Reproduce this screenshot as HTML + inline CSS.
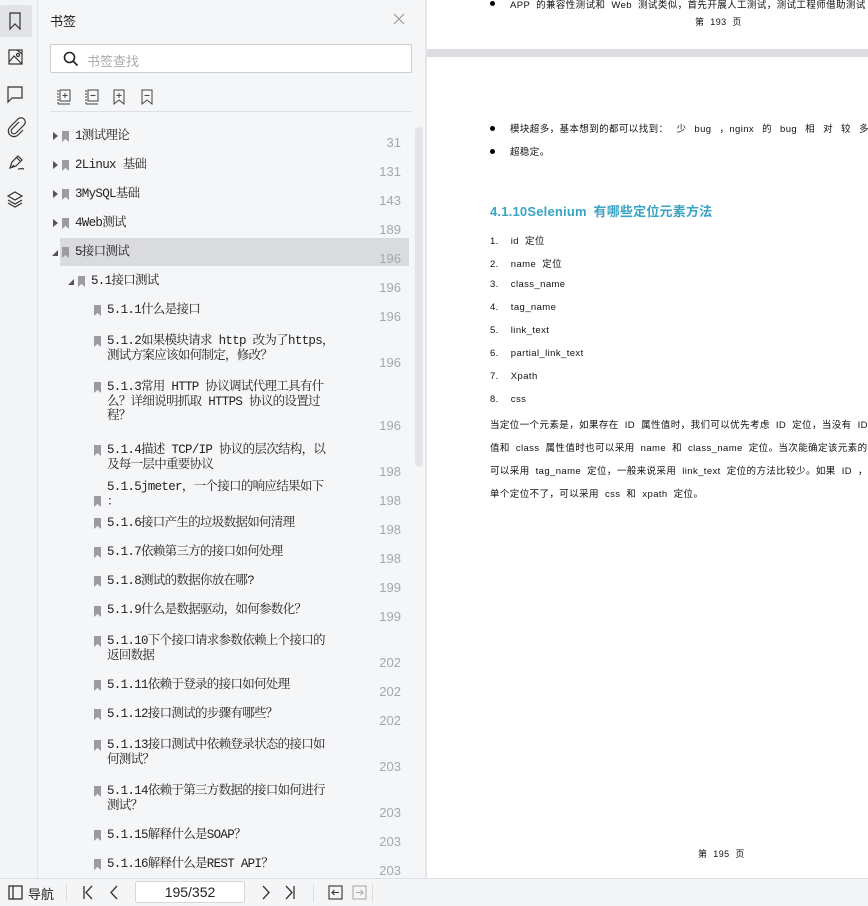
<!DOCTYPE html>
<html><head><meta charset="utf-8"><style>
*{margin:0;padding:0;box-sizing:border-box}
body{width:868px;height:906px;overflow:hidden;background:#fff;font-family:"Liberation Sans","Noto Sans CJK SC",sans-serif;position:relative}
.abs{position:absolute}
#rail{left:0;top:0;width:38px;height:878px;background:#f3f4f6;border-right:1px solid #e3e4e7}
#panel{left:38px;top:0;width:387px;height:878px;background:#f5f6f8;overflow:hidden}
#sep{left:425px;top:0;width:2px;height:878px;background:#e4e5e8}
.t{position:absolute;font-family:"Liberation Mono","Noto Serif CJK SC",monospace;font-size:12.5px;color:#222;line-height:14.5px;white-space:nowrap;letter-spacing:-0.7px}
.n{position:absolute;right:24px;font-size:13px;color:#a3a8b0;line-height:14px}
.bm{position:absolute;width:7px;height:11px;background:#9a9ca0;clip-path:polygon(0 0,100% 0,100% 100%,50% 72%,0 100%)}
.ar{position:absolute;width:0;height:0;border-left:5px solid #555;border-top:4px solid transparent;border-bottom:4px solid transparent}
.ad{position:absolute;width:0;height:0;border-right:6px solid #555;border-top:6px solid transparent}
.d{position:absolute;font-family:"Liberation Sans","Noto Sans CJK SC",sans-serif;font-size:9.5px;color:#111;white-space:nowrap;letter-spacing:0.4px;word-spacing:3px}
#bar{left:0;top:878px;width:868px;height:28px;background:#f4f5f7;border-top:1px solid #dfe0e3}
</style></head><body>
<div id="rail" class="abs">
 <div class="abs" style="left:0;top:5px;width:32px;height:32px;background:#e1e3e7;border-radius:2px"></div>
 <svg class="abs" style="left:0;top:0" width="38" height="220" fill="none" stroke="#333" stroke-width="1.2">
  <path d="M10 13h10v16l-5-5-5 5z"/>
  <rect x="9" y="50" width="13" height="14"/><path d="M9 62l5-6 8 8"/><circle cx="18" cy="55" r="1.5"/><path d="M17 50l5 4"/>
  <path d="M8 87h14v11H12l-4 4z"/>
  <path d="M19 122l-7 7a2.5 2.5 0 0 0 4 4l8-8a4 4 0 0 0-6-6l-8 8a5.5 5.5 0 0 0 8 8l5-5"/>
  <path d="M10 168l2-6 6-6 4 4-6 6-6 2zM16 157l4 4M14 165l-2 2M18 169c2 0 3-1 6 0"/>
  <path d="M15 192l7 4-7 4-7-4zM8 200l7 4 7-4M8 203l7 4 7-4"/>
 </svg>
</div>
<div id="panel" class="abs">
 <div class="abs" style="left:12px;top:11px;font-size:13px;color:#222">书签</div>
 <svg class="abs" style="left:355px;top:13px" width="12" height="12" stroke="#999" stroke-width="1.2"><path d="M1 1l10 10M11 1L1 11"/></svg>
 <div class="abs" style="left:12px;top:44px;width:362px;height:29px;background:#fff;border:1px solid #ccced2;border-radius:2px"></div>
 <svg class="abs" style="left:25px;top:51px" width="16" height="16" fill="none" stroke="#222" stroke-width="1.6"><circle cx="6.5" cy="6.5" r="5"/><path d="M10 10l4.5 4.5"/></svg>
 <div class="abs" style="left:49px;top:51px;font-size:13px;color:#aaa">书签查找</div>
 <svg class="abs" style="left:18px;top:88px" width="110" height="18" fill="none" stroke="#444" stroke-width="1">
  <path d="M2 2v14" stroke-dasharray="2 1"/><rect x="4" y="2" width="10" height="11"/><path d="M9 5v5M6.5 7.5h5M2 16h12" />
  <path d="M30 2v14" stroke-dasharray="2 1"/><rect x="32" y="2" width="10" height="11"/><path d="M34.5 7.5h5M30 16h12"/>
  <path d="M58 2h10v14l-5-4-5 4zM63 5v5M60.5 7.5h5"/>
  <path d="M86 2h10v14l-5-4-5 4zM88.5 7.5h5"/>
 </svg>
 <div class="abs" style="left:12px;top:111px;width:362px;height:1px;background:#dfe0e3"></div>
 <div class="abs" style="left:377px;top:127px;width:8px;height:340px;background:#e3e4e7;border-radius:4px"></div>
 <div class="abs" style="left:22px;top:238px;width:349px;height:28px;background:#d9dbdf"></div>
</div>
<div id="sep" class="abs"></div>

<div class="abs" style="left:0;top:0;width:425px;height:878px;overflow:hidden">
 <div class="ar" style="left:53px;top:132px"></div><div class="bm" style="left:62px;top:131px"></div><div class="t" style="left:75px;top:129px">1测试理论</div><div class="n" style="top:136px">31</div>
 <div class="ar" style="left:53px;top:161px"></div><div class="bm" style="left:62px;top:160px"></div><div class="t" style="left:75px;top:158px">2Linux 基础</div><div class="n" style="top:165px">131</div>
 <div class="ar" style="left:53px;top:190px"></div><div class="bm" style="left:62px;top:189px"></div><div class="t" style="left:75px;top:187px">3MySQL基础</div><div class="n" style="top:194px">143</div>
 <div class="ar" style="left:53px;top:219px"></div><div class="bm" style="left:62px;top:218px"></div><div class="t" style="left:75px;top:216px">4Web测试</div><div class="n" style="top:223px">189</div>
 <div class="ad" style="left:52px;top:250px"></div><div class="bm" style="left:62px;top:247px"></div><div class="t" style="left:75px;top:245px">5接口测试</div><div class="n" style="top:252px">196</div>
 <div class="ad" style="left:68px;top:279px"></div><div class="bm" style="left:78px;top:276px"></div><div class="t" style="left:91px;top:274px">5.1接口测试</div><div class="n" style="top:281px">196</div>

 <div class="bm" style="left:94px;top:305px"></div><div class="t" style="left:107px;top:303px">5.1.1什么是接口</div><div class="n" style="top:310px">196</div>
 <div class="bm" style="left:94px;top:336px"></div><div class="t" style="left:107px;top:334px">5.1.2如果模块请求 http 改为了https，<br>测试方案应该如何制定，修改？</div><div class="n" style="top:356px">196</div>
 <div class="bm" style="left:94px;top:382px"></div><div class="t" style="left:107px;top:380px">5.1.3常用 HTTP 协议调试代理工具有什<br>么？详细说明抓取 HTTPS 协议的设置过<br>程？</div><div class="n" style="top:419px">196</div>
 <div class="bm" style="left:94px;top:445px"></div><div class="t" style="left:107px;top:443px">5.1.4描述 TCP/IP 协议的层次结构，以<br>及每一层中重要协议</div><div class="n" style="top:465px">198</div>
 <div class="bm" style="left:94px;top:496px"></div><div class="t" style="left:107px;top:480px">5.1.5jmeter，一个接口的响应结果如下<br>：</div><div class="n" style="top:494px">198</div>
 <div class="bm" style="left:94px;top:518px"></div><div class="t" style="left:107px;top:516px">5.1.6接口产生的垃圾数据如何清理</div><div class="n" style="top:523px">198</div>
 <div class="bm" style="left:94px;top:547px"></div><div class="t" style="left:107px;top:545px">5.1.7依赖第三方的接口如何处理</div><div class="n" style="top:552px">198</div>
 <div class="bm" style="left:94px;top:576px"></div><div class="t" style="left:107px;top:574px">5.1.8测试的数据你放在哪?</div><div class="n" style="top:581px">199</div>
 <div class="bm" style="left:94px;top:606px"></div><div class="t" style="left:107px;top:603px">5.1.9什么是数据驱动，如何参数化？</div><div class="n" style="top:610px">199</div>
 <div class="bm" style="left:94px;top:636px"></div><div class="t" style="left:107px;top:634px">5.1.10下个接口请求参数依赖上个接口的<br>返回数据</div><div class="n" style="top:656px">202</div>
 <div class="bm" style="left:94px;top:680px"></div><div class="t" style="left:107px;top:678px">5.1.11依赖于登录的接口如何处理</div><div class="n" style="top:685px">202</div>
 <div class="bm" style="left:94px;top:709px"></div><div class="t" style="left:107px;top:707px">5.1.12接口测试的步骤有哪些？</div><div class="n" style="top:714px">202</div>
 <div class="bm" style="left:94px;top:740px"></div><div class="t" style="left:107px;top:738px">5.1.13接口测试中依赖登录状态的接口如<br>何测试？</div><div class="n" style="top:760px">203</div>
 <div class="bm" style="left:94px;top:786px"></div><div class="t" style="left:107px;top:784px">5.1.14依赖于第三方数据的接口如何进行<br>测试？</div><div class="n" style="top:806px">203</div>
 <div class="bm" style="left:94px;top:830px"></div><div class="t" style="left:107px;top:828px">5.1.15解释什么是SOAP？</div><div class="n" style="top:835px">203</div>
 <div class="bm" style="left:94px;top:859px"></div><div class="t" style="left:107px;top:857px">5.1.16解释什么是REST API？</div><div class="n" style="top:864px">203</div>
</div>

<!-- document -->
<div class="abs" style="left:427px;top:0;width:441px;height:878px;background:#fff;overflow:hidden">
 <div class="abs" style="left:0;top:49px;width:441px;height:8px;background:#dcdde0"></div>
 <div class="abs" style="left:63px;top:1px;width:5px;height:5px;border-radius:50%;background:#000"></div>
 <div class="d" style="left:83px;top:-3px">APP 的兼容性测试和 Web 测试类似，首先开展人工测试，测试工程师借助测试</div>
 <div class="d" style="left:268px;top:15px;font-size:9px">第 193 页</div>

 <div class="abs" style="left:63px;top:126px;width:5px;height:5px;border-radius:50%;background:#000"></div>
 <div class="d" style="left:83px;top:121px;word-spacing:5px">模块超多，基本想到的都可以找到： 少 bug ，nginx 的 bug 相 对 较 多 ；</div>
 <div class="abs" style="left:63px;top:149px;width:5px;height:5px;border-radius:50%;background:#000"></div>
 <div class="d" style="left:83px;top:144px">超稳定。</div>

 <div class="d" style="left:63px;top:201px;font-size:13px;font-weight:bold;color:#3aa3c4;letter-spacing:0.2px">4.1.10Selenium 有哪些定位元素方法</div>

 <div class="d" style="left:63px;top:233px">1.&nbsp; id 定位</div>
 <div class="d" style="left:63px;top:256px">2.&nbsp; name 定位</div>
 <div class="d" style="left:63px;top:279px">3.&nbsp; class_name</div>
 <div class="d" style="left:63px;top:302px">4.&nbsp; tag_name</div>
 <div class="d" style="left:63px;top:325px">5.&nbsp; link_text</div>
 <div class="d" style="left:63px;top:348px">6.&nbsp; partial_link_text</div>
 <div class="d" style="left:63px;top:371px">7.&nbsp; Xpath</div>
 <div class="d" style="left:63px;top:394px">8.&nbsp; css</div>
 <div class="d" style="left:63px;top:417px">当定位一个元素是，如果存在 ID 属性值时，我们可以优先考虑 ID 定位，当没有 ID</div>
 <div class="d" style="left:63px;top:440px">值和 class 属性值时也可以采用 name 和 class_name 定位。当次能确定该元素的标</div>
 <div class="d" style="left:63px;top:463px">可以采用 tag_name 定位，一般来说采用 link_text 定位的方法比较少。如果 ID ，n</div>
 <div class="d" style="left:63px;top:486px">单个定位不了，可以采用 css 和 xpath 定位。</div>

 <div class="d" style="left:271px;top:847px;font-size:9px">第 195 页</div>
</div>

<div id="bar" class="abs">
 <svg class="abs" style="left:8px;top:6px" width="16" height="16" fill="none" stroke="#222" stroke-width="1.2"><rect x="1" y="1" width="13" height="13"/><path d="M5 1v13"/></svg>
 <div class="abs" style="left:28px;top:5px;font-size:13px;color:#222">导航</div>
 <div class="abs" style="left:66px;top:5px;width:1px;height:18px;background:#ddd"></div>
 <svg class="abs" style="left:80px;top:6px" width="220" height="16" fill="none" stroke="#333" stroke-width="1.3">
  <path d="M4 1v13M12 1L6 7.5 12 14"/>
  <path d="M37 1L31 7.5 37 14"/>
  <path d="M183 1l6 6.5-6 6.5"/>
  <path d="M206 1l6 6.5-6 6.5M214 1v13"/>
 </svg>
 <div class="abs" style="left:135px;top:2px;width:110px;height:22px;background:#fff;border:1px solid #d5d7db;border-radius:2px;text-align:center;font-size:14px;line-height:20px;color:#222">195/352</div>
 <div class="abs" style="left:313px;top:5px;width:1px;height:18px;background:#ddd"></div>
 <svg class="abs" style="left:328px;top:6px" width="40" height="16" fill="none" stroke-width="1.1">
  <rect x="1" y="1" width="13" height="13" stroke="#333"/><path d="M11 7.5H4M6.5 5L4 7.5 6.5 10" stroke="#333"/>
  <rect x="25" y="1" width="13" height="13" stroke="#aaa"/><path d="M28 7.5h7M32.5 5L35 7.5 32.5 10" stroke="#aaa"/>
 </svg>
 <div class="abs" style="left:372px;top:5px;width:1px;height:18px;background:#ddd"></div>
</div>
</body></html>
